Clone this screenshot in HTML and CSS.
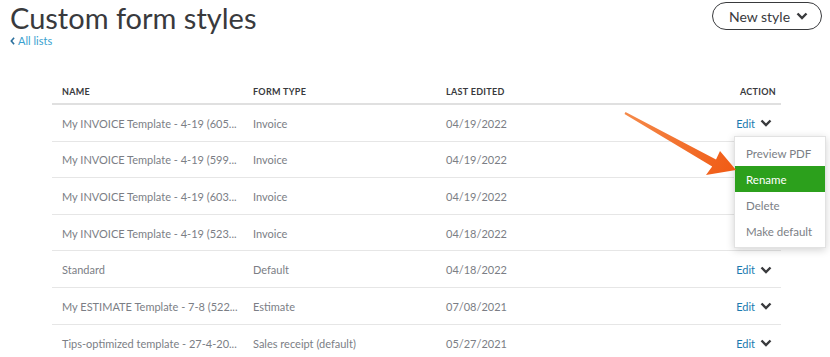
FILE: index.html
```html
<!DOCTYPE html>
<html>
<head>
<meta charset="utf-8">
<link rel="stylesheet" href="styles.css">
</head>
<body>
<div class="page">
  <header class="top">
    <div class="titles">
      <h1 class="title">Custom form styles</h1>
      <a class="back"><svg class="back-ic" viewBox="0 0 6 10" width="5" height="8"><path d="M5 1 L1.5 5 L5 9" fill="none" stroke="currentColor" stroke-width="2"/></svg>All lists</a>
    </div>
    <button class="new-btn">New style <svg class="chev" viewBox="0 0 12 8" width="12" height="8"><path d="M1.5 1.5 L6 6 L10.5 1.5" fill="none" stroke="currentColor" stroke-width="2.4"/></svg></button>
  </header>

  <div class="table">
    <div class="row head">
      <div class="c name">NAME</div>
      <div class="c type">FORM TYPE</div>
      <div class="c date">LAST EDITED</div>
      <div class="c act">ACTION</div>
    </div>
    <div class="row">
      <div class="c name">My INVOICE Template - 4-19 (605...</div>
      <div class="c type">Invoice</div>
      <div class="c date">04/19/2022</div>
      <div class="c act"><span class="edit">Edit</span><svg class="chev" viewBox="0 0 12 8" width="12" height="8"><path d="M1.5 1.5 L6 6 L10.5 1.5" fill="none" stroke="currentColor" stroke-width="2.4"/></svg></div>
    </div>
    <div class="row">
      <div class="c name">My INVOICE Template - 4-19 (599...</div>
      <div class="c type">Invoice</div>
      <div class="c date">04/19/2022</div>
      <div class="c act"></div>
    </div>
    <div class="row">
      <div class="c name">My INVOICE Template - 4-19 (603...</div>
      <div class="c type">Invoice</div>
      <div class="c date">04/19/2022</div>
      <div class="c act"></div>
    </div>
    <div class="row">
      <div class="c name">My INVOICE Template - 4-19 (523...</div>
      <div class="c type">Invoice</div>
      <div class="c date">04/18/2022</div>
      <div class="c act"></div>
    </div>
    <div class="row">
      <div class="c name">Standard</div>
      <div class="c type">Default</div>
      <div class="c date">04/18/2022</div>
      <div class="c act"><span class="edit">Edit</span><svg class="chev" viewBox="0 0 12 8" width="12" height="8"><path d="M1.5 1.5 L6 6 L10.5 1.5" fill="none" stroke="currentColor" stroke-width="2.4"/></svg></div>
    </div>
    <div class="row">
      <div class="c name">My ESTIMATE Template - 7-8 (522...</div>
      <div class="c type">Estimate</div>
      <div class="c date">07/08/2021</div>
      <div class="c act"><span class="edit">Edit</span><svg class="chev" viewBox="0 0 12 8" width="12" height="8"><path d="M1.5 1.5 L6 6 L10.5 1.5" fill="none" stroke="currentColor" stroke-width="2.4"/></svg></div>
    </div>
    <div class="row last">
      <div class="c name">Tips-optimized template - 27-4-20...</div>
      <div class="c type">Sales receipt (default)</div>
      <div class="c date">05/27/2021</div>
      <div class="c act"><span class="edit">Edit</span><svg class="chev" viewBox="0 0 12 8" width="12" height="8"><path d="M1.5 1.5 L6 6 L10.5 1.5" fill="none" stroke="currentColor" stroke-width="2.4"/></svg></div>
    </div>
  </div>

  <ul class="menu">
    <li class="mi">Preview PDF</li>
    <li class="mi active">Rename</li>
    <li class="mi">Delete</li>
    <li class="mi">Make default</li>
  </ul>

  <svg class="arrow" viewBox="0 0 830 357" width="830" height="357">
    <defs>
      <linearGradient id="ag" x1="624" y1="113" x2="736" y2="170" gradientUnits="userSpaceOnUse">
        <stop offset="0" stop-color="#f58a4a"/>
        <stop offset="1" stop-color="#f05a14"/>
      </linearGradient>
    </defs>
    <path d="M624.5 113.9 L625.5 112.1 L716 159.4 L720 151 L736 170 L706 175 L712.2 166.6 Z" fill="url(#ag)"/>
  </svg>
</div>
</body>
</html>
```

FILE: styles.css
```css
* { box-sizing: border-box; }
html, body { margin: 0; padding: 0; background: #fff; }
body {
  font-family: Lato, "Open Sans", sans-serif;
  color: #393a3d;
  width: 830px;
  height: 357px;
  overflow: hidden;
}
.page { position: relative; width: 830px; height: 357px; }

.top {
  display: flex;
  justify-content: space-between;
  align-items: flex-start;
  padding: 0 8px 0 10px;
}
.title {
  margin: 0;
  font-weight: 400;
  font-size: 29px;
  line-height: 34px;
  color: #393a3d;
  padding-top: 1px;
}
.back {
  display: flex;
  align-items: center;
  gap: 3px;
  margin-top: 0;
  font-size: 11px;
  line-height: 12px;
  color: #3a9fcf;
}
.back-ic { color: #2b6f9c; }

.new-btn {
  margin-top: 2px;
  width: 110px;
  height: 28px;
  border: 1.5px solid #393a3d;
  border-radius: 15px;
  background: #fff;
  font-family: inherit;
  font-size: 14px;
  color: #393a3d;
  display: flex;
  align-items: center;
  justify-content: center;
  gap: 6px;
  padding: 0 0 0 3px;
}
.chev { color: #393a3d; display: block; }

.table {
  margin: 32px 0 0 52px;
  width: 729px;
}
.row {
  display: grid;
  grid-template-columns: 201px 193px 1fr 120px;
  height: 36.6px;
  padding-top: 1px;
  align-items: center;
  border-bottom: 1px solid #e6e6e6;
  font-size: 11px;
  color: #7b7e85;
}
.row.last { border-bottom: none; }
.row.head {
  height: 26px;
  border-bottom: 2px solid #e0e0e0;
  font-size: 9px;
  font-weight: 700;
  color: #393a3d;
  letter-spacing: 0.3px;
  align-items: start;
  padding-top: 7px;
}
.c.name { padding-left: 10px; }
.c.act {
  display: flex;
  justify-content: flex-end;
  align-items: center;
  gap: 5px;
  padding-right: 9px;
}
.head .c.act { padding-right: 5px; }
.edit { color: #1a7bb0; }

.menu {
  position: absolute;
  left: 734px;
  top: 136px;
  width: 92px;
  margin: 0;
  padding: 3px 0;
  list-style: none;
  background: #fff;
  border: 1px solid #e2e2e2;
  box-shadow: 0 2px 8px rgba(0,0,0,0.18);
  font-size: 11.5px;
  color: #7b7e85;
}
.mi {
  height: 26px;
  display: flex;
  align-items: center;
  padding-left: 11px;
}
.mi.active { background: #2ca01c; color: #fff; }

.arrow {
  position: absolute;
  left: 0;
  top: 0;
  pointer-events: none;
}
```
